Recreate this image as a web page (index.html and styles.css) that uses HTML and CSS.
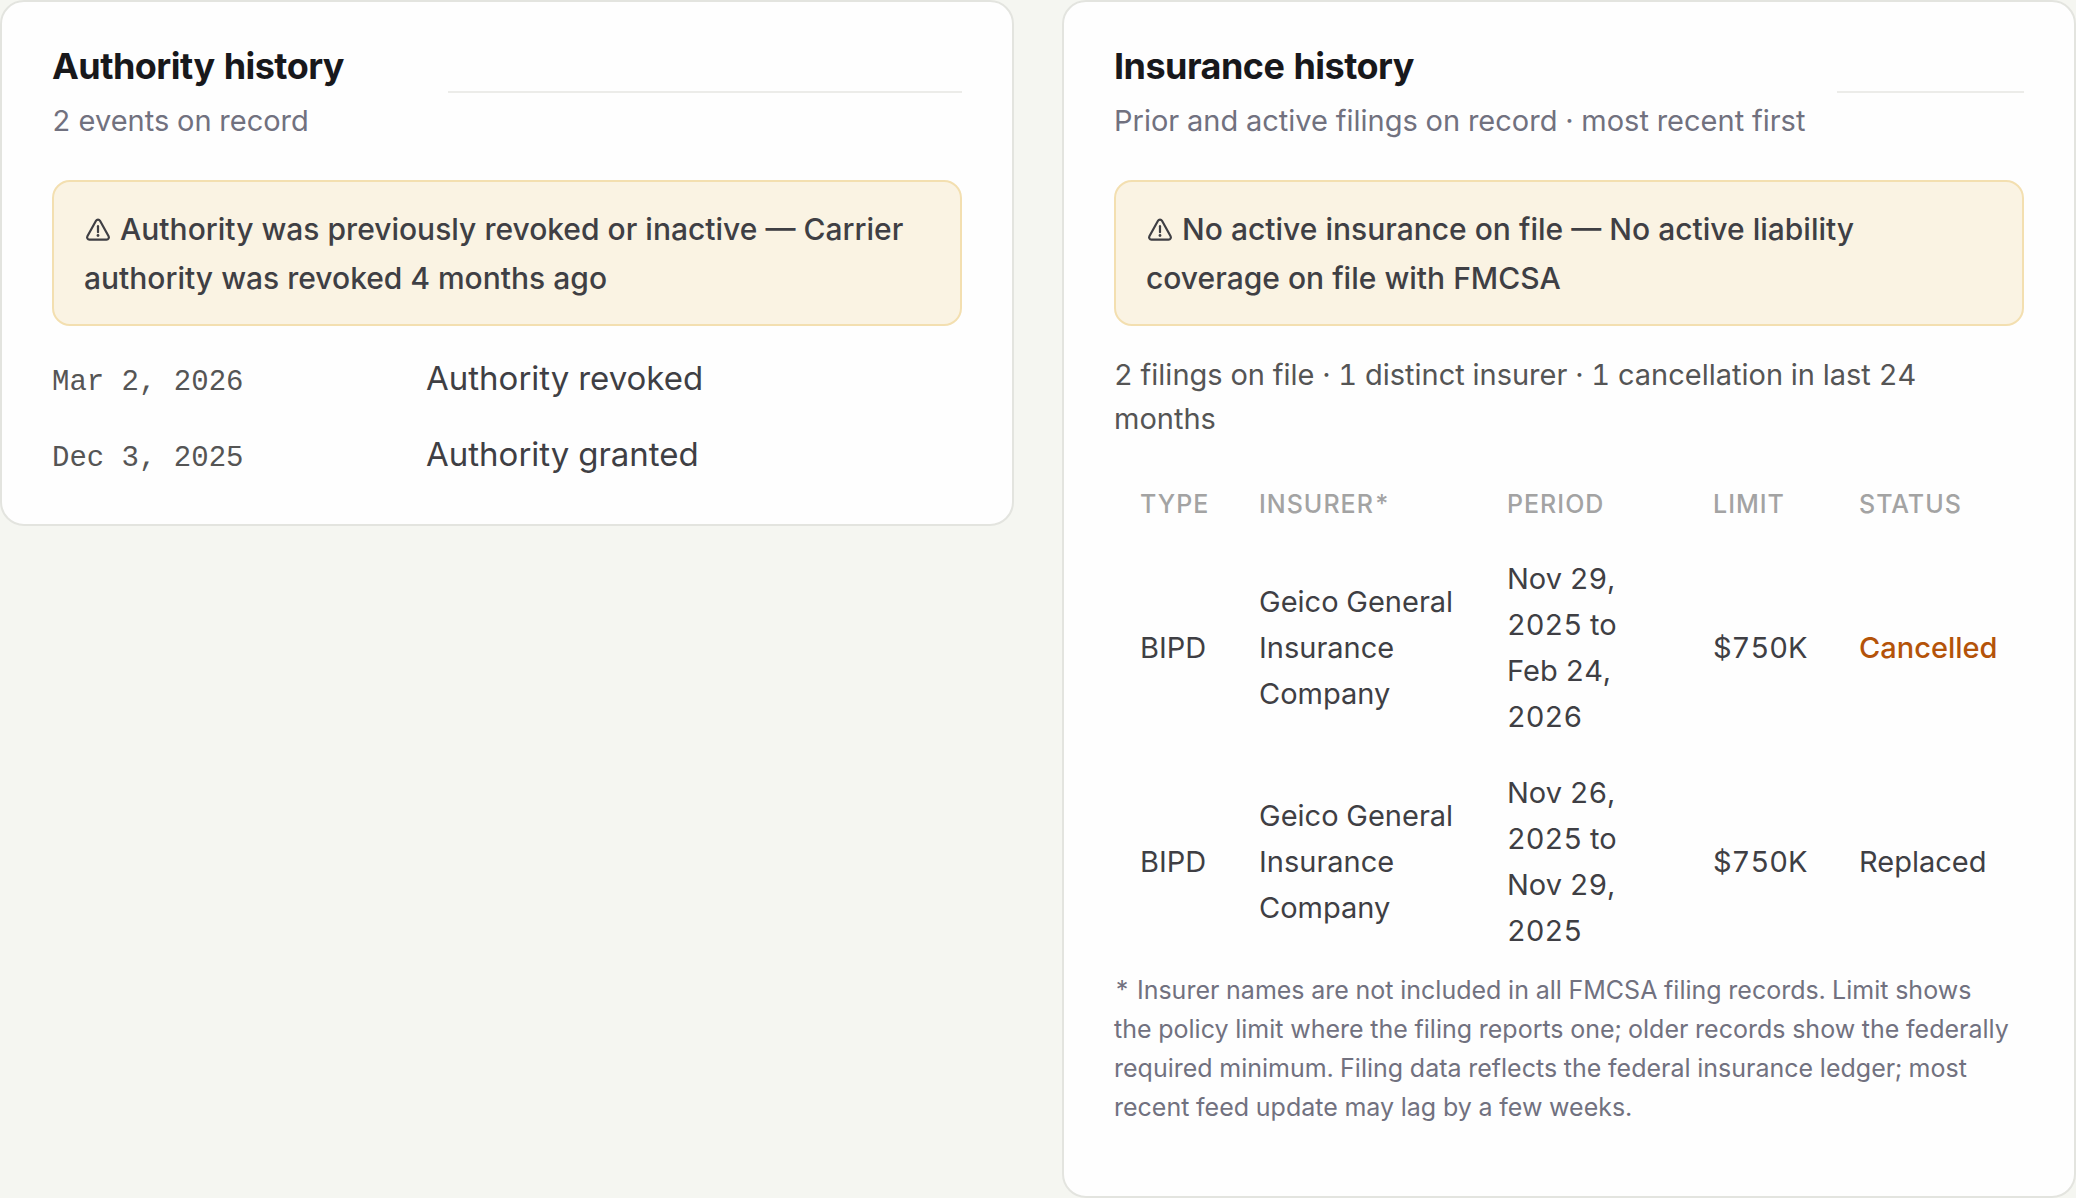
FILE: index.html
```html
<!DOCTYPE html>
<html lang="en">
<head>
  <meta charset="UTF-8" />
  <meta name="viewport" content="width=device-width, initial-scale=1.0" />
  <title>Carrier history</title>
  <link rel="stylesheet" href="styles.css">
</head>
<body>
  <main class="history-grid">
    <section class="card">
      <header class="card-header">
        <div class="card-heading">
          <h2>Authority history</h2>
          <p class="subtitle">2 events on record</p>
        </div>
        <span class="rule"></span>
      </header>

      <div class="notice">
        <svg class="warn-icon" viewBox="0 0 26 24" aria-hidden="true">
          <path d="M11 2.8 2.4 18.2a2.3 2.3 0 0 0 2 3.4h17.2a2.3 2.3 0 0 0 2-3.4L15 2.8a2.3 2.3 0 0 0-4 0z" />
          <path d="M13 8.2v6" />
          <circle cx="13" cy="17.5" r="1.4" />
        </svg>
        Authority was previously revoked or inactive — Carrier authority was revoked 4 months ago
      </div>

      <dl class="timeline">
        <dt>Mar 2, 2026</dt>
        <dd>Authority revoked</dd>
        <dt>Dec 3, 2025</dt>
        <dd>Authority granted</dd>
      </dl>
    </section>

    <section class="card">
      <header class="card-header">
        <div class="card-heading">
          <h2>Insurance history</h2>
          <p class="subtitle">Prior and active filings on record · most recent first</p>
        </div>
        <span class="rule"></span>
      </header>

      <div class="notice">
        <svg class="warn-icon" viewBox="0 0 26 24" aria-hidden="true">
          <path d="M11 2.8 2.4 18.2a2.3 2.3 0 0 0 2 3.4h17.2a2.3 2.3 0 0 0 2-3.4L15 2.8a2.3 2.3 0 0 0-4 0z" />
          <path d="M13 8.2v6" />
          <circle cx="13" cy="17.5" r="1.4" />
        </svg>
        No active insurance on file — No active liability coverage on file with FMCSA
      </div>

      <p class="summary">2 filings on file · 1 distinct insurer · 1 cancellation in last 24 months</p>

      <table class="filings">
        <thead>
          <tr>
            <th class="col-type" scope="col">Type</th>
            <th class="col-insurer" scope="col">Insurer*</th>
            <th scope="col">Period</th>
            <th class="col-limit" scope="col">Limit</th>
            <th class="col-status" scope="col">Status</th>
          </tr>
        </thead>
        <tbody>
          <tr>
            <td>BIPD</td>
            <td>Geico General Insurance Company</td>
            <td>Nov 29, 2025 to Feb 24, 2026</td>
            <td>$750K</td>
            <td class="cancelled">Cancelled</td>
          </tr>
          <tr>
            <td>BIPD</td>
            <td>Geico General Insurance Company</td>
            <td>Nov 26, 2025 to Nov 29, 2025</td>
            <td>$750K</td>
            <td>Replaced</td>
          </tr>
        </tbody>
      </table>

      <p class="footnote">* Insurer names are not included in all FMCSA filing records. Limit shows<br> the policy limit where the filing reports one; older records show the federally required minimum. Filing data reflects the federal insurance ledger; most recent feed update may lag by a few weeks.</p>
    </section>
  </main>
</body>
</html>
```
FILE: styles.css
```css
* {
  box-sizing: border-box;
}

body {
  margin: 0;
  background-color: #f5f6f1;
  color: #3f3f44;
  font-family: Inter, "Liberation Sans", sans-serif;
  font-size: 29px;
  font-variant-numeric: tabular-nums;
}

h2,
p,
dl,
dd {
  margin: 0;
}

.history-grid {
  display: grid;
  grid-template-columns: 1fr 1fr;
  align-items: start;
  gap: 48px;
}

.card {
  background-color: #fefefe;
  border: 2px solid #e3e4df;
  border-radius: 24px;
  padding: 42px 50px 32px;
}

.card-header {
  display: flex;
  align-items: center;
  gap: 32px;
  margin-bottom: 41px;
}

.card-heading {
  min-width: 364px;
}

h2 {
  color: #18181b;
  font-size: 36px;
  font-weight: 700;
  line-height: 44px;
  letter-spacing: -0.015em;
}

.subtitle {
  margin-top: 15px;
  color: #71717f;
  line-height: 36px;
}

.rule {
  flex: 1;
  height: 2px;
  background-color: #ecece9;
}

.notice {
  background-color: #faf3e3;
  border: 2px solid #f3dfb0;
  border-radius: 18px;
  padding: 23px 30px 21px;
  font-size: 30px;
  font-weight: 500;
  line-height: 49px;
}

.warn-icon {
  width: 28px;
  height: 24px;
  vertical-align: -2px;
  fill: none;
  stroke: currentColor;
  stroke-width: 2.2;
  stroke-linecap: round;
  stroke-linejoin: round;
}

.warn-icon circle {
  fill: currentColor;
  stroke: none;
}

.timeline {
  display: grid;
  grid-template-columns: 374px 1fr;
  grid-auto-rows: 76px;
  align-items: baseline;
  margin-top: 14px;
  line-height: 76px;
}

.timeline dt {
  color: #555;
  font-family: "Liberation Mono", monospace;
}

.timeline dd {
  font-size: 33px;
}

.summary {
  margin-top: 27px;
  color: #555;
  line-height: 44px;
}

.filings {
  width: 100%;
  margin-top: 25px;
  border-collapse: collapse;
  table-layout: fixed;
  text-align: left;
}

.filings th {
  padding: 16px 26px;
  color: #a3a3a3;
  font-size: 25px;
  font-weight: 500;
  line-height: 45px;
  letter-spacing: 0.04em;
  text-transform: uppercase;
}

.filings td {
  padding: 13px 26px 17px;
  line-height: 46px;
}

.col-type {
  width: 119px;
}

.col-insurer {
  width: 248px;
}

.col-limit {
  width: 146px;
}

.col-status {
  width: 191px;
}

.filings .cancelled {
  color: #b45309;
  font-weight: 500;
}

.footnote {
  margin-bottom: 37px;
  color: #71717f;
  font-size: 25px;
  line-height: 39px;
}
```
